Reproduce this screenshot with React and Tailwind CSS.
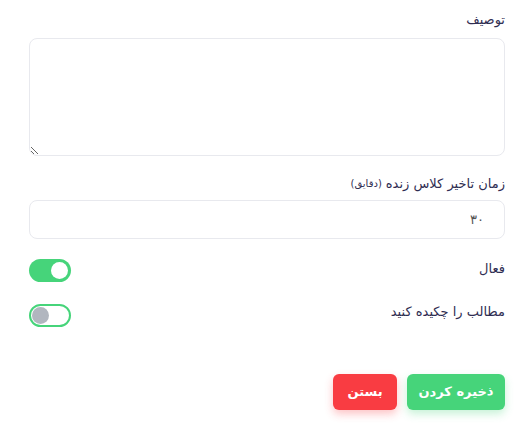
export default function App() {
  const font = { fontFamily: '"DejaVu Sans", "Noto Sans", sans-serif' };
  return (
    <div dir="rtl" className="w-[517px] h-[437px] bg-white pr-[12px] pl-[29px] pt-[10px] text-[#2f2d52]" style={font}>
      <div className="text-[13px] leading-[20px] mb-[8px]">توصیف</div>
      <textarea className="block w-full h-[118px] border border-[#e8e9ee] rounded-[8px] resize-y outline-none" />
      <div className="mt-[18px] mb-[6px] text-[13px] leading-[20px] flex items-center gap-[4px]">
        <span>زمان تاخیر کلاس زنده</span>
        <span className="text-[10px]">(دقایق)</span>
      </div>
      <div className="h-[39px] border border-[#e8e9ee] rounded-[8px] flex items-center pr-[20px] text-[13px] text-[#555]">
        ۳۰
      </div>
      <div className="mt-[20px] flex justify-between items-start">
        <span className="text-[13px] leading-[18px] pt-[1px]">فعال</span>
        <div className="w-[42px] h-[23px] rounded-full bg-[#46d47a] flex items-center justify-start pr-[3px]">
          <div className="w-[17px] h-[17px] rounded-full bg-white" />
        </div>
      </div>
      <div className="mt-[22px] flex justify-between items-start">
        <span className="text-[13px] leading-[18px] -mt-[1px]">مطالب را چکیده کنید</span>
        <div className="w-[42px] h-[23px] rounded-full border-2 border-[#46d47a] bg-white flex items-center justify-end pl-[1px]">
          <div className="w-[17px] h-[17px] rounded-full bg-[#b1b6bf]" />
        </div>
      </div>
      <div className="mt-[47px] flex gap-[10px]">
        <button className="w-[98px] h-[36px] rounded-[6px] bg-[#46d47a] text-white font-bold text-[13px] shadow-[0_4px_8px_rgba(70,212,122,0.3)]">ذخیره کردن</button>
        <button className="w-[64px] h-[36px] rounded-[6px] bg-[#f93c42] text-white font-bold text-[13px] shadow-[0_4px_8px_rgba(249,60,66,0.3)]">بستن</button>
      </div>
    </div>
  );
}
